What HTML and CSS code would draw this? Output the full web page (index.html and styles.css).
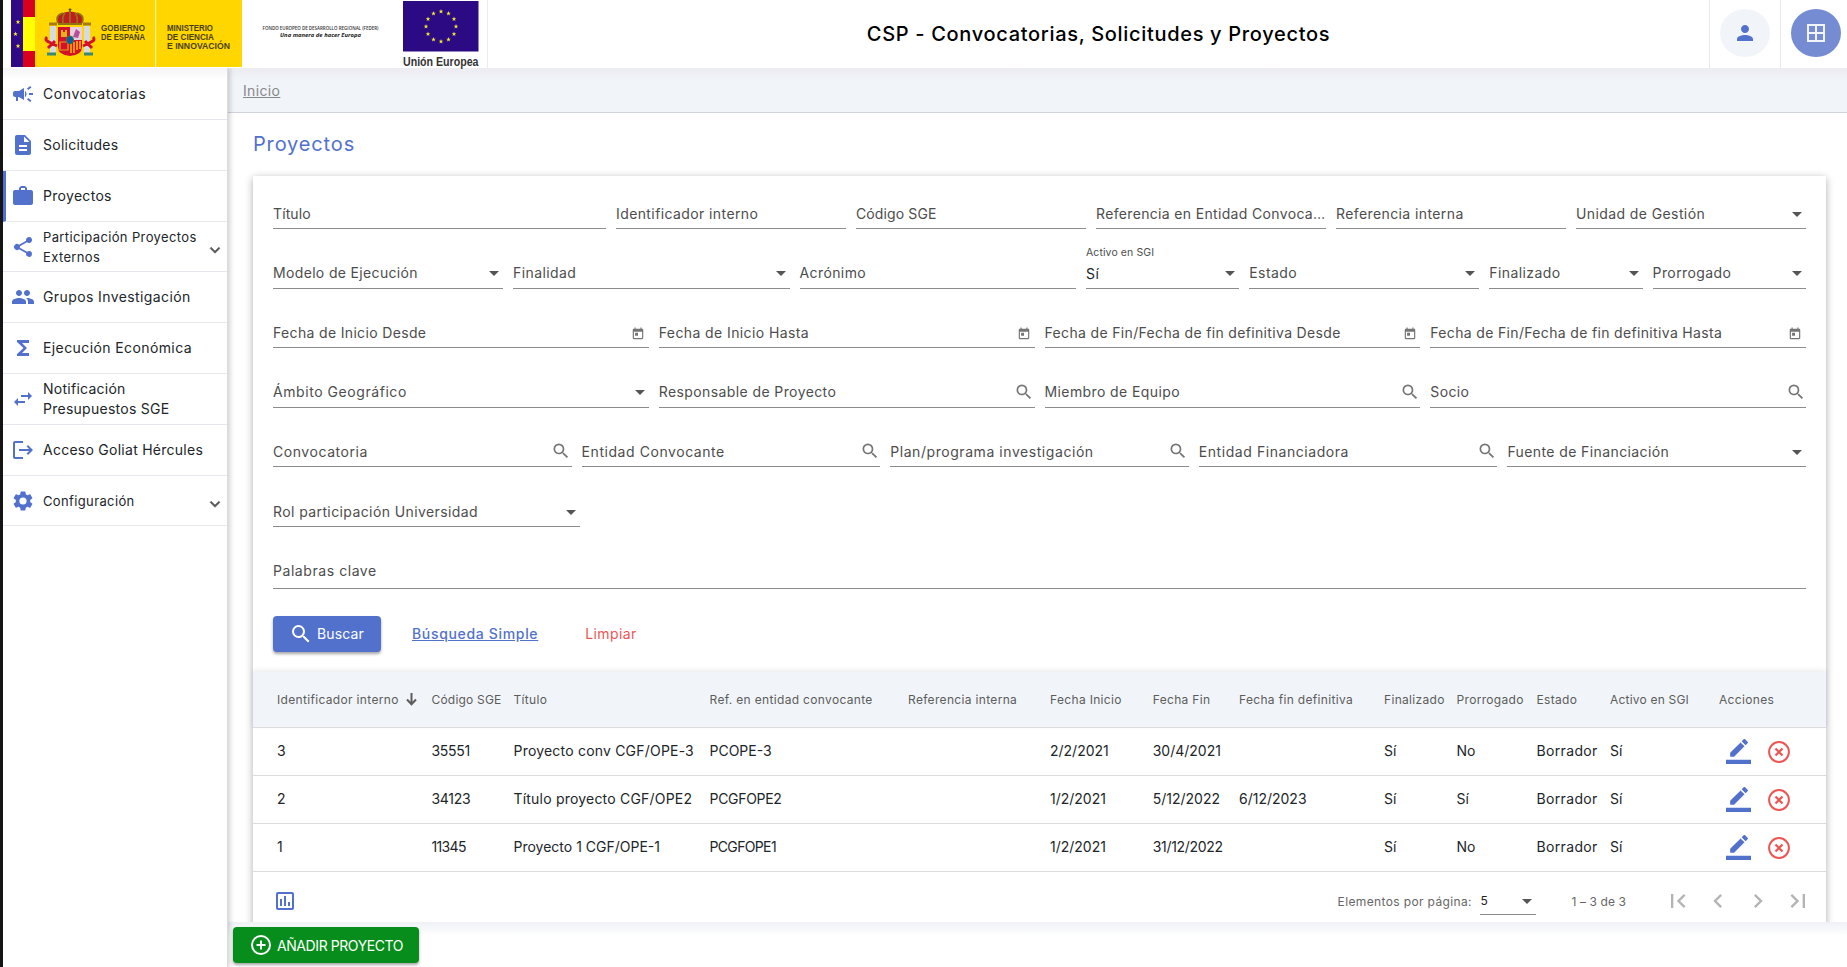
FILE: index.html
```html
<!DOCTYPE html>
<html lang="es">
<head>
<meta charset="utf-8">
<title>CSP - Proyectos</title>
<link rel="stylesheet" href="styles.css">
</head>
<body>
<svg class="defs" width="0" height="0">
  <defs>
    <symbol id="search" viewBox="0 0 24 24"><path d="M15.5 14h-.79l-.28-.27A6.47 6.47 0 0 0 16 9.5 6.5 6.5 0 1 0 9.5 16c1.61 0 3.09-.59 4.23-1.57l.27.28v.79l5 4.99L20.49 19l-4.99-5zm-6 0C7.01 14 5 11.99 5 9.5S7.01 5 9.5 5 14 7.01 14 9.5 11.99 14 9.5 14z"/></symbol>
    <symbol id="today" viewBox="0 0 24 24"><path d="M19 3h-1V1h-2v2H8V1H6v2H5c-1.11 0-2 .9-2 2v14c0 1.1.89 2 2 2h14c1.1 0 2-.9 2-2V5c0-1.1-.9-2-2-2zm0 16H5V8h14v11zM7 10h5v5H7z"/></symbol>
    <symbol id="edit" viewBox="0 0 24 24"><path d="M17.75 7L14 3.25l-10 10V17h3.75l10-10zm2.96-2.96a1 1 0 0 0 0-1.41L18.37.29a1 1 0 0 0-1.41 0L15 2.25 18.75 6l1.96-1.96zM0 20h24v4H0z"/></symbol>
    <symbol id="cancel" viewBox="0 0 24 24"><path fill="none" stroke="currentColor" stroke-width="1.7" d="M12 3.500a8.500 8.500 0 1 0 0 17 8.500 8.500 0 0 0 0-17z"/><path fill="none" stroke="currentColor" stroke-width="1.9" d="M9 9l6 6M15 9l-6 6"/></symbol>
    <symbol id="down" viewBox="0 0 24 24"><path d="M7.410 8.590 12 13.170l4.590-4.580L18 10l-6 6-6-6z" stroke="currentColor" stroke-width=".6"/></symbol>
    <symbol id="left" viewBox="0 0 24 24"><path d="M15.410 7.410 14 6l-6 6 6 6 1.410-1.410L10.830 12z"/></symbol>
    <symbol id="right" viewBox="0 0 24 24"><path d="M10 6 8.590 7.410 13.170 12l-4.580 4.590L10 18l6-6z"/></symbol>
    <symbol id="first" viewBox="0 0 24 24"><path d="M18.410 16.590 13.820 12l4.590-4.590L17 6l-6 6 6 6zM6 6h2v12H6z"/></symbol>
    <symbol id="last" viewBox="0 0 24 24"><path d="M5.590 7.410 10.180 12l-4.590 4.590L7 18l6-6-6-6zM16 6h2v12h-2z"/></symbol>
    <path id="star" d="M0-2.4.6-.75 2.3-.75.95.3 1.45 2 0 1-1.45 2-.95.3-2.3-.75-.6-.75z"/>
  </defs>
</svg>
<div class="app">
  <header class="top">
    <svg class="logo-gob" viewBox="0 0 231 67" width="231" height="67">
      <rect width="231" height="67" fill="#ffd600"/>
      <rect width="12" height="67" fill="#2e0a87"/>
      <rect x="12" width="12" height="17" fill="#d8001c"/><rect x="12" y="17" width="12" height="34" fill="#ff0"/><rect x="12" y="51" width="12" height="16" fill="#d8001c"/>
      <g fill="#f4e928"><use href="#star" x="7" y="22"/><use href="#star" x="4.500" y="34"/><use href="#star" x="7" y="46"/></g>
      <g>
        <rect x="39" y="26" width="6" height="28" fill="#d5dbe0"/><rect x="73" y="26" width="6" height="28" fill="#d5dbe0"/>
        <path d="M38 24h8M72 24h8" stroke="#a87c14" stroke-width="3"/><path d="M36 54h9M73 54h9" stroke="#3a8a72" stroke-width="3"/>
        <path d="M36 37q-3 3 2 5l8 4M82 37q3 3-2 5l-8 4M37 48l7-7M81 48l-7-7" stroke="#d3122a" stroke-width="3" fill="none"/>
        <path d="M47 27h24v20q0 8-12 9-12-1-12-9z" fill="#d3122a"/>
        <path d="M59 27h12v13H59z" fill="#e9cfdc"/><path d="M62 37l3-8 4 3-2 6z" fill="#b84f9d"/>
        <path d="M50 37v-7h2v2h2v-2h2v7z" fill="#e4b01c"/>
        <path d="M60 42v11M63 42v11M66 41v9M69 41v8" stroke="#ffd600" stroke-width="1.300"/>
        <path d="M49 42h8v8h-8z" fill="none" stroke="#e4a21c" stroke-width="1.200"/>
        <ellipse cx="59" cy="40" rx="3.500" ry="4" fill="#155a9c" stroke="#357a4a"/>
        <path d="M47 23q-3-8 5-10 7-3 14 0 8 2 5 10z" fill="#c41a22"/>
        <path d="M47 23q-3-8 5-10M52 23q-1-7 2-10M59 23V10M66 23q1-7-2-10M71 23q3-8-5-10M47 24h24" stroke="#8f7211" stroke-width="1.800" fill="none"/>
        <path d="M59 8v4M57.500 9.500h3" stroke="#704f12"/>
      </g>
      <rect x="144" width="1.200" height="67" fill="#fff4a8"/>
      <g class="gob"><text x="90" y="31.300" textLength="44" lengthAdjust="spacingAndGlyphs">GOBIERNO</text><text x="90" y="40.200" textLength="44" lengthAdjust="spacingAndGlyphs">DE ESPAÑA</text>
      <text x="156" y="31.300" textLength="46" lengthAdjust="spacingAndGlyphs">MINISTERIO</text><text x="156" y="40.200" textLength="47" lengthAdjust="spacingAndGlyphs">DE CIENCIA</text><text x="156" y="49" textLength="63" lengthAdjust="spacingAndGlyphs">E INNOVACIÓN</text></g>
    </svg>
    <svg class="logo-feder" viewBox="0 0 150 67" width="150" height="67">
      <text class="f1" x="14.500" y="30" textLength="116" lengthAdjust="spacingAndGlyphs">FONDO EUROPEO DE DESARROLLO REGIONAL (FEDER)</text>
      <text class="f2" x="32" y="37" textLength="81" lengthAdjust="spacingAndGlyphs">Una manera de hacer Europa</text>
    </svg>
    <svg class="logo-ue" viewBox="0 0 76 70" width="76" height="70">
      <rect y="1" width="75.500" height="50.500" fill="#2c0a84"/>
      <g fill="#f0e92c"><use href="#star" x="38" y="11.500"/><use href="#star" x="45.500" y="13.500"/><use href="#star" x="51" y="19"/><use href="#star" x="53" y="26.500"/><use href="#star" x="51" y="34"/><use href="#star" x="45.500" y="39.500"/><use href="#star" x="38" y="41.500"/><use href="#star" x="30.500" y="39.500"/><use href="#star" x="25" y="34"/><use href="#star" x="23" y="26.500"/><use href="#star" x="25" y="19"/><use href="#star" x="30.500" y="13.500"/></g>
      <text class="ue" x="0" y="66" textLength="75.500" lengthAdjust="spacingAndGlyphs">Unión Europea</text>
    </svg>
    <h1 class="app-title"><span>CSP - Convocatorias, Solicitudes y Proyectos</span></h1>
    <div class="top-cell"><span class="round"><svg viewBox="0 0 24 24" width="24" height="24"><path d="M12 12c2.210 0 4-1.790 4-4s-1.790-4-4-4-4 1.790-4 4 1.790 4 4 4zm0 2c-2.670 0-8 1.340-8 4v2h16v-2c0-2.660-5.330-4-8-4z"/></svg></span></div>
    <div class="top-cell last"><span class="round full"><svg viewBox="0 0 24 24" width="24" height="24"><path fill="none" stroke="currentColor" stroke-width="2" d="M4 4h16v16H4zM12 4v16M4 12h16"/></svg></span></div>
  </header>
  <div class="body">
    <nav class="side">
      <a class="item loose"><svg viewBox="0 0 24 24"><path d="M18 11v2h4v-2h-4zm-2 6.610c.96.710 2.210 1.650 3.200 2.390.4-.530.800-1.070 1.200-1.600-.990-.740-2.240-1.680-3.200-2.400-.4.540-.8 1.080-1.200 1.610zM20.400 5.600c-.4-.530-.8-1.070-1.200-1.600-.990.740-2.240 1.680-3.200 2.400.4.530.8 1.070 1.200 1.600.960-.720 2.210-1.650 3.200-2.400zM4 9c-1.100 0-2 .9-2 2v2c0 1.100.9 2 2 2h1v4h2v-4h1l5 3V6L8 9H4zm11.500 3c0-1.330-.58-2.530-1.500-3.350v6.690c.92-.810 1.500-2.010 1.500-3.340z"/></svg><span>Convocatorias</span></a>
      <a class="item tight"><svg viewBox="0 0 24 24"><path d="M14 2H6c-1.100 0-2 .9-2 2v16c0 1.100.9 2 2 2h12c1.100 0 2-.9 2-2V8l-6-6zm2 16H8v-2h8v2zm0-4H8v-2h8v2zm-3-5V3.500L18.500 9H13z"/></svg><span>Solicitudes</span></a>
      <a class="item active"><svg viewBox="0 0 24 24"><path d="M20 6h-4V4l-2-2h-4L8 4v2H4c-1.100 0-2 .9-2 2v11c0 1.100.9 2 2 2h16c1.100 0 2-.9 2-2V8c0-1.100-.9-2-2-2zm-6 0h-4V4h4z"/></svg><span>Proyectos</span></a>
      <a class="item sub"><svg viewBox="0 0 24 24"><path d="M18 16.080c-.76 0-1.440.3-1.960.770L8.910 12.700c.05-.230.090-.460.090-.700s-.04-.470-.09-.700l7.050-4.110A3 3 0 1 0 15 5c0 .240.040.470.090.700L8.040 9.810a3 3 0 1 0 0 4.380l7.120 4.160a2.900 2.900 0 1 0 2.840-2.270z"/></svg><span>Participación Proyectos<br>Externos</span><svg class="chev"><use href="#down"/></svg></a>
      <a class="item"><svg viewBox="0 0 24 24"><path d="M16 11c1.660 0 2.990-1.340 2.990-3S17.660 5 16 5s-3 1.340-3 3 1.340 3 3 3zm-8 0c1.660 0 2.990-1.340 2.990-3S9.660 5 8 5 5 6.340 5 8s1.340 3 3 3zm0 2c-2.330 0-7 1.170-7 3.500V19h14v-2.500C15 14.170 10.330 13 8 13zm8 0c-.290 0-.620.020-.970.050C16.190 13.890 17 15.020 17 16.500V19h6v-2.500c0-2.330-4.670-3.500-7-3.500z"/></svg><span>Grupos Investigación</span></a>
      <a class="item"><svg viewBox="0 0 24 24"><path d="M18 4H6v2l6.500 6L6 18v2h12v-3h-7l5-5-5-5h7z"/></svg><span>Ejecución Económica</span></a>
      <a class="item tight"><svg viewBox="0 0 24 24"><path d="M7 11 3 15l4 4v-3h7v-2H7zM21 9l-4-4v3h-7v2h7v3z"/></svg><span>Notificación<br>Presupuestos SGE</span></a>
      <a class="item tight"><svg viewBox="0 0 24 24"><path d="M17 7l-1.410 1.410L18.170 11H8v2h10.170l-2.580 2.580L17 17l5-5zM4 5h8V3H4c-1.100 0-2 .9-2 2v14c0 1.100.9 2 2 2h8v-2H4z"/></svg><span>Acceso Goliat Hércules</span></a>
      <a class="item sub"><svg viewBox="0 0 24 24"><path d="M19.140 12.940c.040-.300.060-.610.060-.940 0-.320-.020-.640-.070-.940l2.030-1.580a.49.49 0 0 0 .120-.610l-1.920-3.320a.49.49 0 0 0-.590-.220l-2.390.96a7 7 0 0 0-1.620-.94l-.36-2.540a.48.48 0 0 0-.480-.410h-3.840a.47.47 0 0 0-.470.410l-.36 2.540c-.590.240-1.130.570-1.620.94l-2.390-.96a.48.48 0 0 0-.590.220L2.740 8.870a.47.47 0 0 0 .120.610l2.030 1.580c-.05.300-.090.630-.090.940s.02.640.070.940l-2.030 1.580a.49.49 0 0 0-.120.610l1.920 3.320c.120.220.370.290.590.220l2.390-.96c.500.380 1.030.700 1.620.94l.36 2.540c.05.240.240.410.480.410h3.840c.240 0 .440-.170.470-.410l.36-2.540c.590-.240 1.130-.560 1.620-.94l2.390.96c.220.080.470 0 .590-.220l1.920-3.320a.47.47 0 0 0-.120-.610zM12 15.600A3.600 3.600 0 1 1 12 8.400a3.600 3.600 0 0 1 0 7.200z"/></svg><span>Configuración</span><svg class="chev"><use href="#down"/></svg></a>
    </nav>
    <main class="main">
      <div class="crumbs"><a>Inicio</a></div>
      <div class="content">
        <h2><span>Proyectos</span></h2>
        <section class="card">
          <form class="filters">
            <div class="row r1"><div class="fld short"><label>Título</label></div><div class="fld"><label>Identificador interno</label></div><div class="fld short"><label>Código SGE</label></div><div class="fld long"><label>Referencia en Entidad Convoca…</label></div><div class="fld"><label>Referencia interna</label></div><div class="fld sel"><label>Unidad de Gestión</label></div></div>
            <div class="row r2"><div class="fld sel long"><label>Modelo de Ejecución</label></div><div class="fld sel"><label>Finalidad</label></div><div class="fld"><label>Acrónimo</label></div><div class="fld sel filled"><small>Activo en SGI</small><label>Sí</label></div><div class="fld sel"><label>Estado</label></div><div class="fld sel"><label>Finalizado</label></div><div class="fld sel"><label>Prorrogado</label></div></div>
            <div class="row r3"><div class="fld long"><label>Fecha de Inicio Desde</label><svg class="cal"><use href="#today"/></svg></div><div class="fld"><label>Fecha de Inicio Hasta</label><svg class="cal"><use href="#today"/></svg></div><div class="fld long"><label>Fecha de Fin/Fecha de fin definitiva Desde</label><svg class="cal"><use href="#today"/></svg></div><div class="fld long"><label>Fecha de Fin/Fecha de fin definitiva Hasta</label><svg class="cal"><use href="#today"/></svg></div></div>
            <div class="row r4"><div class="fld sel wide"><label>Ámbito Geográfico</label></div><div class="fld"><label>Responsable de Proyecto</label><svg class="mag"><use href="#search"/></svg></div><div class="fld"><label>Miembro de Equipo</label><svg class="mag"><use href="#search"/></svg></div><div class="fld"><label>Socio</label><svg class="mag"><use href="#search"/></svg></div></div>
            <div class="row r5"><div class="fld wide"><label>Convocatoria</label><svg class="mag"><use href="#search"/></svg></div><div class="fld wide"><label>Entidad Convocante</label><svg class="mag"><use href="#search"/></svg></div><div class="fld wide"><label>Plan/programa investigación</label><svg class="mag"><use href="#search"/></svg></div><div class="fld wide"><label>Entidad Financiadora</label><svg class="mag"><use href="#search"/></svg></div><div class="fld sel"><label>Fuente de Financiación</label></div></div>
            <div class="row r6"><div class="fld sel"><label>Rol participación Universidad</label></div></div>
            <div class="row r7"><div class="fld wide"><label>Palabras clave</label></div></div>
            <div class="actions"><button type="button" class="btn primary"><svg><use href="#search"/></svg><span>Buscar</span></button><a class="link">Búsqueda Simple</a><a class="clear">Limpiar</a></div>
          </form>
          <div class="grid head"><span>Identificador interno<svg viewBox="0 0 11 13" width="11" height="13"><path d="M5.500 0v11M1 6.500l4.500 4.800L10 6.500" fill="none" stroke="currentColor" stroke-width="2"/></svg></span><span class="near">Código SGE</span><span>Título</span><span>Ref. en entidad convocante</span><span>Referencia interna</span><span>Fecha Inicio</span><span>Fecha Fin</span><span>Fecha fin definitiva</span><span>Finalizado</span><span>Prorrogado</span><span>Estado</span><span class="near">Activo en SGI</span><span>Acciones</span></div>
          <div class="grid"><span>3</span><span class="code">35551</span><span class="title">Proyecto conv CGF/OPE-3</span><span>PCOPE-3</span><span></span><span>2/2/2021</span><span>30/4/2021</span><span></span><span>Sí</span><span>No</span><span class="state">Borrador</span><span>Sí</span><span class="acts"><svg class="ed"><use href="#edit"/></svg><svg class="ca"><use href="#cancel"/></svg></span></div>
          <div class="grid"><span>2</span><span class="code">34123</span><span class="title">Título proyecto CGF/OPE2</span><span class="code">PCGFOPE2</span><span></span><span>1/2/2021</span><span>5/12/2022</span><span>6/12/2023</span><span>Sí</span><span>Sí</span><span class="state">Borrador</span><span>Sí</span><span class="acts"><svg class="ed"><use href="#edit"/></svg><svg class="ca"><use href="#cancel"/></svg></span></div>
          <div class="grid"><span>1</span><span class="code ones">11345</span><span>Proyecto 1 CGF/OPE-1</span><span class="code ones">PCGFOPE1</span><span></span><span>1/2/2021</span><span class="code">31/12/2022</span><span></span><span>Sí</span><span>No</span><span class="state">Borrador</span><span>Sí</span><span class="acts"><svg class="ed"><use href="#edit"/></svg><svg class="ca"><use href="#cancel"/></svg></span></div>
          <div class="pager"><svg class="chart" viewBox="0 0 24 24"><path d="M19 3H5c-1.100 0-2 .9-2 2v14c0 1.100.9 2 2 2h14c1.100 0 2-.9 2-2V5c0-1.100-.9-2-2-2zm0 16H5V5h14zM7 10h2v7H7zM11 7h2v10h-2zM15 13h2v4h-2z"/></svg><span class="per">Elementos por página:</span><div class="fld sel size"><label>5</label></div><span class="range">1 – 3 de 3</span><div class="nav"><svg><use href="#first"/></svg><svg><use href="#left"/></svg><svg><use href="#right"/></svg><svg><use href="#last"/></svg></div></div>
        </section>
      </div>
      <div class="foot"><button type="button" class="btn add"><svg viewBox="0 0 24 24"><path fill="none" stroke="currentColor" stroke-width="2" d="M12 3a9 9 0 1 0 0 18 9 9 0 0 0 0-18zM12 7.500v9M7.500 12h9"/></svg><span>AÑADIR PROYECTO</span></button></div>
    </main>
  </div>
</div>
</body>
</html>
```
FILE: styles.css
```css
* { box-sizing: border-box; }
body { margin: 0; height: 967px; overflow: hidden; background: #fff; color: #212529; font-family: "Inter", "Open Sans", sans-serif; font-size: 14px; }
.defs { position: absolute; }
svg { fill: currentColor; flex: none; }
.app { height: 967px; border-left: 3px solid #141414; display: flex; flex-direction: column; }
.top { height: 68px; flex: none; display: flex; align-items: flex-start; background: #fff; padding-left: 8px; }
.logo-feder { margin-left: 6px; }
.logo-ue { margin-left: 5px; position: relative; z-index: 3; }
.gob text { font: 700 8.8px "Liberation Sans", sans-serif; fill: #4c4010; }
.f1 { font: 600 4.8px "Open Sans", sans-serif; fill: #333; }
.f2 { font: italic 700 5.5px "Open Sans", sans-serif; fill: #222; }
.ue { font: 700 12px "Liberation Sans", sans-serif; fill: #333; }
.app-title { flex: 1; height: 68px; margin: 0 0 0 8px; border-left: 1px solid #ececf0; font-size: 20px; line-height: 68px; font-weight: 500; letter-spacing: .68px; text-align: center; color: #000; }
.top-cell { width: 71px; height: 68px; border-left: 1px solid #e8e8ee; padding: 9px 10px; }
.top-cell.last { width: 67px; }
.round { width: 50px; height: 48px; border-radius: 50%; background: #f1f5f9; color: #5271cc; display: flex; align-items: center; justify-content: center; }
.round.full { background: #758bd2; color: #f1f5f9; }
.body { flex: 1; display: flex; min-height: 0; }
.side { width: 225px; flex: none; border-right: 1px solid #dcdcdc; box-shadow: 2px 0 5px rgba(0,0,0,.18); z-index: 2; background: linear-gradient(#f5f5f8, #fff 12px); padding-top: 1px; letter-spacing: .4px; clip-path: inset(0 -10px 0 0); }
.item { display: flex; align-items: center; height: 51px; border-bottom: 1px solid #e7e8ed; padding: 0 6px 0 8px; line-height: 20px; white-space: nowrap; }
.item svg { width: 24px; height: 24px; color: #5271cc; margin-right: 8px; }
.item.active { border-left: 3px solid #5271cc; padding-left: 5px; letter-spacing: .3px; }
.item.loose { letter-spacing: .58px; }
.item.tight { letter-spacing: .26px; }
.item.sub { height: 50px; font-size: 13px; letter-spacing: .37px; }
.item .chev { width: 20px; height: 20px; margin: 6px -4px 0 auto; color: #555; }
.main { flex: 1; display: flex; flex-direction: column; min-width: 0; }
.crumbs { height: 45px; flex: none; border-bottom: 1px solid #d0d4da; background: linear-gradient(#ececf1, #f1f5f9 14px); padding: 0 15px; line-height: 46px; color: #888; text-decoration: underline; letter-spacing: .35px; }
.content { height: 809px; flex: none; overflow: hidden; padding: 0 21px 0 25px; }
h2 { margin: 0; height: 63px; line-height: 62px; font-size: 20px; font-weight: 400; color: #5271cc; letter-spacing: .85px; }
.card { height: 800px; box-shadow: 0 2px 8px rgba(0,0,0,.32); background: #fff; }
.filters { padding: 0 20px; height: 496px; color: #4d4d4d; letter-spacing: .4px; }
.row { display: grid; gap: 10px; height: 60px; }
.r1 { height: 53px; grid-template-columns: 333px repeat(5, 1fr); }
.r2 { grid-template-columns: 230px 276.5px 276.5px 153.300px 230px 153.300px 1fr; }
.r3, .r4 { grid-template-columns: repeat(4, 1fr); }
.r3, .r5 { height: 59px; }
.r5 { grid-template-columns: repeat(5, 1fr); }
.r6 { grid-template-columns: 307px; }
.r7 { height: 62px; }
.fld { border-bottom: 1px solid #8c8c8c; display: flex; align-items: flex-end; padding-bottom: 4px; position: relative; min-width: 0; }
.fld label { flex: 1; line-height: 20px; white-space: nowrap; }
.fld.long { letter-spacing: .34px; }
.fld.short { letter-spacing: .12px; }
.fld.wide { letter-spacing: .56px; }
.r2 .fld, .r4 .fld { padding-bottom: 5px; }
.r7 .fld { padding-bottom: 7px; }
.sel::after { content: ""; border: 5px solid transparent; border-top-color: #555; border-bottom: 0; margin: 0 4px 7px 0; }
.r2 .filled { padding-bottom: 4px; }
.r2 .filled::after { margin-bottom: 8px; }
.filled label { color: #212529; }
.filled small { position: absolute; left: 0; top: 16px; font-size: 10.5px; line-height: 16px; letter-spacing: .1px; color: #4d4d4d; }
.cal { width: 14px; height: 14px; margin: 0 3.600px 2px; color: #757575; }
.mag { width: 20px; height: 20px; margin: 0 .5px 1px; color: #757575; }
.r4 .mag { margin-bottom: 0; }
.actions { display: flex; align-items: center; height: 36px; margin-top: 27px; }
.btn { border: 0; height: 36px; border-radius: 4px; color: #fff; font: inherit; display: flex; align-items: center; white-space: nowrap; box-shadow: 0 2px 3px rgba(0,0,0,.35); }
.primary { width: 108px; background: #5271cc; padding: 0 16px; letter-spacing: .15px; }
.primary svg { width: 24px; height: 24px; margin-right: 4px; }
.primary span { padding-bottom: 1px; }
.link { margin-left: 31px; padding-bottom: 1px; color: #5271cc; font-weight: 500; text-decoration: underline; letter-spacing: .67px; }
.clear { margin-left: 47px; padding-bottom: 1px; color: #ee5656; }
.grid { display: grid; height: 48px; align-items: center; border-bottom: 1px solid #dcdcdc; padding-left: 24px; grid-template-columns: 154.5px 82px 196px 198.500px 142px 102.700px 86.300px 145px 72.500px 80px 73.500px 109px 1fr; white-space: nowrap; }
.grid > span { padding-bottom: 2px; }
.head { height: 56px; background: #f1f5f9; font-size: 12px; color: #5c5c5c; letter-spacing: .33px; box-shadow: 0 -2px 5px rgba(0,0,0,.08); }
.head > span { padding-bottom: 0; }
.head .near { letter-spacing: .2px; }
.head svg { margin-left: 7px; vertical-align: -2px; }
.code { letter-spacing: -.3px; }
.code.ones { letter-spacing: -.65px; }
.title { letter-spacing: .2px; }
.state { letter-spacing: .35px; }
.grid > .acts { display: flex; align-items: center; gap: 13.500px; padding: 0 0 0 7.300px; }
.ed { width: 25px; height: 25px; color: #5271cc; }
.ca { width: 28px; height: 28px; color: #ee5656; }
.pager { display: flex; height: 58px; align-items: center; padding: 0 14px 0 19.500px; font-size: 12px; color: #666; letter-spacing: .1px; }
.chart { width: 24px; height: 24px; color: #5271cc; }
.per { margin-left: auto; letter-spacing: .37px; }
.size { width: 56px; margin-left: 8.500px; height: 27px; padding-bottom: 3px; color: #222; }
.range { margin: 0 38px 0 35px; }
.nav { display: flex; gap: 12px; color: #b4b4b4; }
.nav svg { width: 28px; height: 28px; }
.foot { flex: 1; background: linear-gradient(#eff1f6, #fff 14px); padding: 5px; }
.add { width: 186px; background: #068d1c; padding: 0 16px; letter-spacing: -.42px; }
.add svg { width: 24px; height: 24px; margin-right: 4px; }
```
